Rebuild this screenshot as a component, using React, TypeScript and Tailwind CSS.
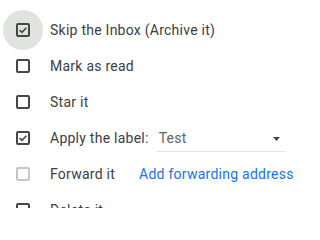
import React from "react";

type Row = { label: string; checked?: boolean; disabled?: boolean; focus?: boolean; extra?: React.ReactNode };

function Box({ checked, disabled, focus }: { checked?: boolean; disabled?: boolean; focus?: boolean }) {
  const color = disabled ? "#c4c7c5" : "#444746";
  return (
    <div className="relative w-[14px] h-[14px] shrink-0">
      {focus && <div className="absolute -left-[13px] -top-[13px] w-[40px] h-[40px] rounded-full bg-[#e1e3e1]" />}
      <svg className="relative" width="14" height="14" viewBox="0 0 14 14" fill="none">
        <rect x="1" y="1" width="12" height="12" rx="1" stroke={color} strokeWidth="2" />
        {checked && <path d="M3.6 7.1 L6 9.4 L10.4 4.8" stroke={color} strokeWidth="1.6" />}
      </svg>
    </div>
  );
}

const ROWS: Row[] = [
  { label: "Skip the Inbox (Archive it)", checked: true, focus: true },
  { label: "Mark as read" },
  { label: "Star it" },
  {
    label: "Apply the label:",
    checked: true,
    extra: (
      <div className="ml-[8px] w-[128px] h-[26px] mt-[2px] flex items-center justify-between border-b border-[#e3e3e3] text-[#5f6368]">
        <span className="ml-[2px]">Test</span>
        <svg width="7" height="4" viewBox="0 0 7 4" className="mr-[5px]">
          <path d="M0 0 L7 0 L3.5 4 Z" fill="#444746" />
        </svg>
      </div>
    ),
  },
  {
    label: "Forward it",
    disabled: true,
    extra: <a className="ml-[24px] text-[#1a73e8]">Add forwarding address</a>,
  },
  { label: "Delete it" },
];

export default function App() {
  return (
    <div className="w-[320px] h-[208px] overflow-hidden bg-white pt-[12px] pl-[16px] text-[14px] tracking-[0.25px] text-[#3c4043]" style={{ fontFamily: "Roboto, 'Liberation Sans', sans-serif" }}>
      {ROWS.map((r) => (
        <div key={r.label} className="h-[36px] flex items-center">
          <Box checked={r.checked} disabled={r.disabled} focus={r.focus} />
          <span className="ml-[20px] whitespace-nowrap">{r.label}</span>
          {r.extra}
        </div>
      ))}
    </div>
  );
}
